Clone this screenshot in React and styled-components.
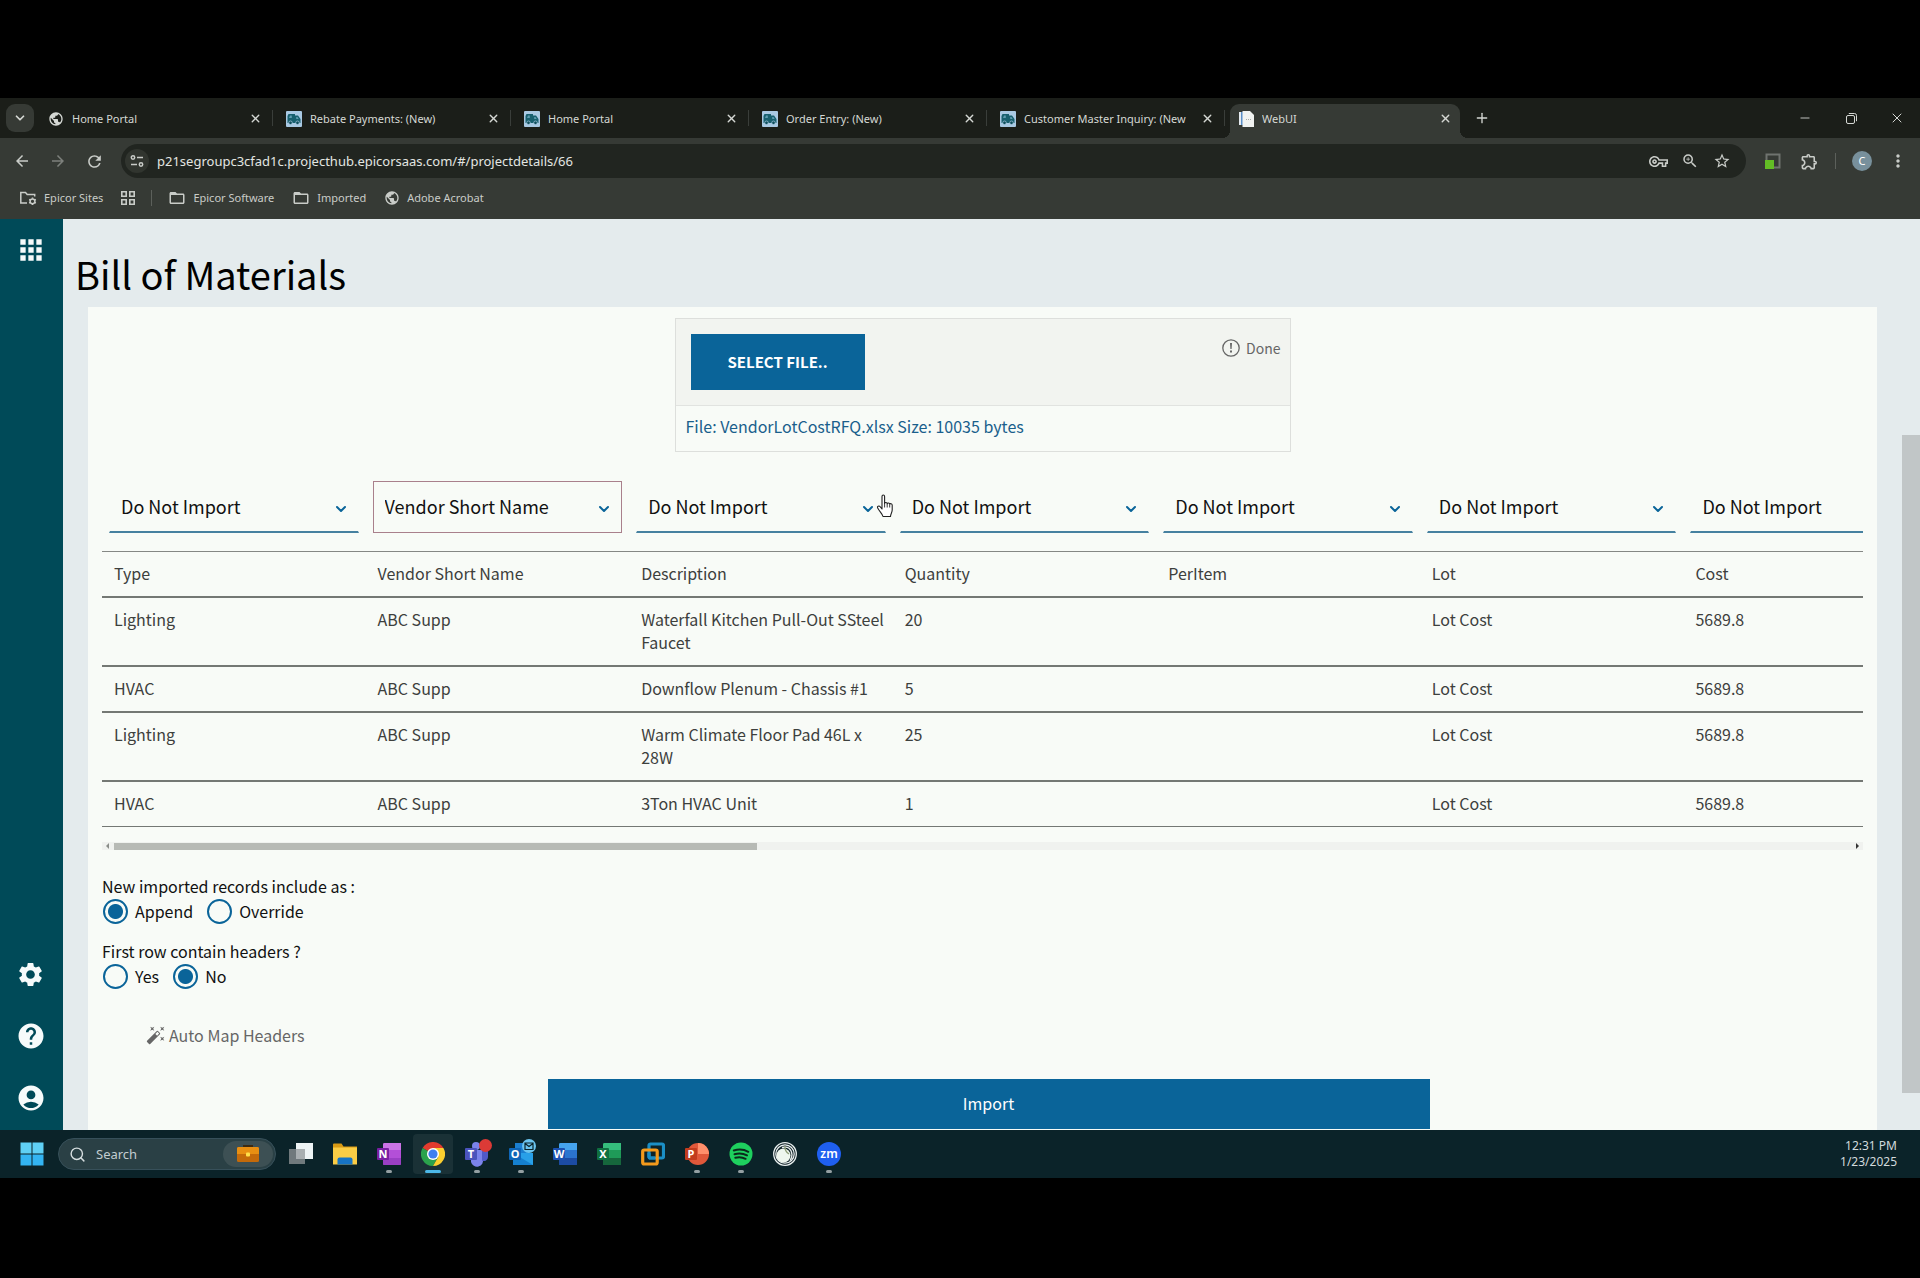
import React, { useState } from 'react'
import styled, { createGlobalStyle, css } from 'styled-components'
import {
  MdAccountCircle, MdApps, MdArrowBack, MdArrowForward, MdAutoFixHigh, MdFolderOpen, MdHelp,
  MdMoreVert, MdOutlineExtension, MdOutlineVpnKey, MdPublic, MdRefresh, MdSettings, MdStarOutline, MdZoomIn,
} from 'react-icons/md'
import { ChevronDown, Minus, Plus, Search, X } from 'lucide-react'

const uiFont = '"Noto Sans", "Open Sans", sans-serif'
const pageFont = '"Noto Sans CJK SC", "Noto Sans", sans-serif'

const GlobalStyle = createGlobalStyle`
  * { box-sizing: border-box; }
  body { margin: 0; background: #000; }
  button, input, select { font: inherit; margin: 0; }
  svg { display: block; flex: none; }
`

const Screen = styled.div`
  position: relative;
  display: flex;
  flex-direction: column;
  min-height: 100vh;
  padding: 98px 0 100px;
  background: #000;
  font-family: ${uiFont};
`

/* ---------- browser ---------- */

const PlainButton = styled.button`
  display: flex;
  align-items: center;
  justify-content: center;
  padding: 0;
  border: 0;
  background: none;
  color: inherit;
  cursor: pointer;
`
const TabStrip = styled.div`
  display: flex;
  height: 40px;
  padding: 6px 0 0 6px;
  background: #1b1e19;
  color: #d5d8d4;
`
const TabSearch = styled(PlainButton)`
  width: 28px;
  height: 28px;
  margin-right: 2px;
  border-radius: 9px;
  background: #363a35;
`
const Tab = styled.div`
  position: relative;
  display: flex;
  flex: 0 1 238px;
  align-items: center;
  gap: 8px;
  min-width: 0;
  padding: 0 10px 5px 12px;
  font-size: 11px;
  line-height: 16px;
  border-right: 1px solid transparent;
  ${p => !p.$active && css`
    background: linear-gradient(#3a3e3a, #3a3e3a) 100% 6px / 1px 16px no-repeat;
  `}
  ${p => p.$active && css`
    margin: 0 4px;
    padding: 0 6px 5px 8px;
    flex-basis: 230px;
    border-radius: 9px 9px 0 0;
    background: #363a35;
    &::before, &::after {
      content: '';
      position: absolute;
      bottom: 0;
      width: 8px;
      height: 8px;
    }
    &::before { left: -8px; background: radial-gradient(circle at 0 0, transparent 8px, #363a35 8px); }
    &::after { right: -9px; background: radial-gradient(circle at 100% 0, transparent 8px, #363a35 8px); }
  `}
`
const TabTitle = styled.span`
  flex: 1;
  overflow: hidden;
  white-space: nowrap;
`
const TabButton = styled(PlainButton)`
  width: 16px;
  height: 16px;
`
const NewTab = styled(PlainButton)`
  width: 36px;
  height: 28px;
`
const WindowControls = styled.div`
  display: flex;
  margin-left: auto;
`
const WindowButton = styled(PlainButton)`
  width: 46px;
  height: 28px;
`
const Toolbar = styled.div`
  display: flex;
  align-items: center;
  height: 46px;
  padding: 0 4px;
  background: #363a35;
  color: #c9ccc8;
`
const ToolButton = styled(PlainButton)`
  width: 36px;
  height: 34px;
  color: ${p => (p.$dim ? '#7d807c' : 'inherit')};
`
const AddressBar = styled.div`
  display: flex;
  flex: 1;
  align-items: center;
  height: 34px;
  margin: 0 9px;
  padding: 0 8px;
  border-radius: 17px;
  background: #212520;
`
const SiteInfo = styled(PlainButton)`
  width: 24px;
  height: 24px;
  margin-left: -4px;
  margin-right: 8px;
  border-radius: 12px;
  background: #31352f;
`
const Address = styled.input`
  flex: 1;
  min-width: 0;
  padding: 0;
  border: 0;
  outline: 0;
  background: none;
  color: #e3e6e2;
  font-size: 13px;
  line-height: 20px;
`
const PillButton = styled(PlainButton)`
  width: 32px;
  height: 32px;
`
const Separator = styled.span`
  width: 1px;
  height: 16px;
  margin: 0 ${p => (p.$wide ? '16px' : '12px 0 8px')};
  background: #5c605b;
`
const Avatar = styled(PlainButton)`
  width: 20px;
  height: 20px;
  margin: 0 8px 0 4px;
  border-radius: 50%;
  background: #78909c;
  color: #fff;
  font-size: 11px;
  line-height: 16px;
`
const Bookmarks = styled.nav`
  display: flex;
  align-items: center;
  height: 35px;
  padding: 0 19px 7px;
  background: #363a35;
  color: #c9ccc8;
  font-size: 11px;
  line-height: 16px;
`
const Bookmark = styled.a`
  display: flex;
  align-items: center;
  gap: 7px;
  margin-right: 18px;
  color: inherit;
  text-decoration: none;
  white-space: nowrap;
`

/* ---------- page ---------- */

const Page = styled.div`
  display: flex;
  flex: 1;
  background: #e4ebed;
  font-family: ${pageFont};
`
const Sidebar = styled.nav`
  display: flex;
  flex-direction: column;
  align-items: center;
  width: 63px;
  flex: none;
  padding: 15px 2px 16px 0;
  background: #004a58;
  color: #f6fbfb;
`
const SideButton = styled(PlainButton)`
  width: 32px;
  height: 32px;
  margin-top: ${p => (p.$push ? 'auto' : '0')};
  margin-bottom: ${p => (p.$last ? '0' : '30px')};
`
const Main = styled.main`
  display: flex;
  flex: 1;
  flex-direction: column;
  min-width: 0;
`
const Title = styled.h1`
  height: 88px;
  margin: 0;
  padding: 25px 0 0 12px;
  color: #000;
  font-size: 38px;
  font-weight: 400;
  line-height: 60px;
`
const Panel = styled.section`
  display: flex;
  flex: 1;
  flex-direction: column;
  margin: 0 25px;
  padding: 11px 14px 1px;
  background: #f8fbf7;
`
const Scroller = styled.div`
  width: 18px;
  flex: none;
  padding: 216px 0 37px;
`
const Thumb = styled.div`
  height: 100%;
  background: #c1c6c7;
`
const Upload = styled.div`
  width: 616px;
  max-width: 100%;
  margin: 0 auto 29px;
  border: 1px solid #dddfdc;
  color: #666;
`
const UploadTop = styled.div`
  display: flex;
  align-items: flex-start;
  justify-content: space-between;
  height: 87px;
  padding: 15px 9px 15px 15px;
  border-bottom: 1px solid #e1e3e0;
  background: #f2f4f0;
`
const SelectFile = styled.button`
  width: 174px;
  height: 56px;
  border: 0;
  background: #0a6499;
  color: #fff;
  font-size: 15px;
  font-weight: 700;
  line-height: 24px;
`
const Status = styled.span`
  display: flex;
  align-items: center;
  gap: 6px;
  padding-top: 2px;
  font-size: 14px;
  line-height: 24px;
`
const FileName = styled.div`
  padding: 8px 10px 13px;
  color: #1a5f8c;
  font-size: 16px;
  line-height: 24px;
`
const TableWrap = styled.div`
  overflow: hidden;
`
const Table = styled.table`
  width: 1845px;
  table-layout: fixed;
  border-collapse: separate;
  border-spacing: 0;
  color: #3d403d;
  font-size: 16px;
  line-height: 23px;
  text-align: left;
`
const MapCell = styled.td`
  height: 71px;
  padding: 0 7px 18px;
  border-bottom: 1px solid #858885;
`
const Cell = styled.td`
  padding: 10px 6px 11px 12px;
  border-bottom: ${p => (p.$last ? '1px' : '2px')} solid #747874;
  font-weight: 400;
  vertical-align: top;
`
const SelectBox = styled.div`
  position: relative;
  svg {
    position: absolute;
    top: 20px;
    right: 10px;
    color: #0a6499;
    pointer-events: none;
  }
`
const Select = styled.select`
  display: block;
  width: 100%;
  height: 52px;
  padding: 0 36px 2px 11px;
  border: 1px solid ${p => (p.$mapped ? '#a9808c' : 'transparent')};
  border-bottom: ${p => (p.$mapped ? '1px solid #a9808c' : '2px solid #4681a0')};
  border-radius: 0;
  background: none;
  color: #111;
  font-size: 18px;
  line-height: 26px;
  appearance: none;
`
const TableScroll = styled.div`
  display: flex;
  align-items: center;
  gap: 2px;
  height: 8px;
  margin: 15px 0 24px;
  background: #f0f2ef;
  color: #8a8d89;
  svg { margin: 0 1px; }
`
const TableTrack = styled.div`
  flex: 1;
  height: 7px;
`
const TableThumb = styled.div`
  width: 37%;
  height: 7px;
  background: #b7bab5;
`
const Options = styled.fieldset`
  display: grid;
  grid-template-columns: auto auto 1fr;
  column-gap: 13px;
  margin: 0 0 15px;
  padding: 0;
  border: 0;
  color: #111;
  font-size: 16px;
  line-height: 25px;
  legend { padding: 0; }
`
const Option = styled.label`
  display: flex;
  align-items: center;
  gap: 7px;
  padding-left: 1px;
`
const Radio = styled.input`
  appearance: none;
  width: 25px;
  height: 25px;
  border: 2px solid #0a6499;
  border-radius: 50%;
  background: transparent;
  &:checked { background: radial-gradient(circle, #0a6499 7px, transparent 8px); }
`
const AutoMap = styled.button`
  display: flex;
  align-items: center;
  gap: 3px;
  align-self: flex-start;
  margin: 18px 0 0 44px;
  padding: 0;
  border: 0;
  background: none;
  color: #666;
  font-size: 16px;
  line-height: 26px;
`
const ImportRow = styled.div`
  display: flex;
  justify-content: center;
  margin-top: auto;
  padding-left: 12px;
`
const ImportButton = styled.button`
  width: 882px;
  height: 50px;
  padding-bottom: 3px;
  border: 0;
  background: #0a6499;
  color: #fff;
  font-size: 16px;
  line-height: 24px;
`

/* ---------- taskbar ---------- */

const Taskbar = styled.footer`
  display: flex;
  align-items: center;
  height: 48px;
  padding: 0 23px 0 10px;
  background: #0b2329;
`
const TaskSearch = styled.label`
  display: flex;
  align-items: center;
  gap: 10px;
  width: 218px;
  height: 32px;
  margin: 0 3px 0 4px;
  padding: 0 2px 0 10px;
  border: 1px solid #37505a;
  border-radius: 16px;
  background: #2a4045;
  color: #d6dee0;
  input {
    flex: 1;
    min-width: 0;
    padding: 0;
    border: 0;
    outline: 0;
    background: none;
    color: inherit;
    font-size: 13px;
    line-height: 20px;
  }
  input::placeholder { color: #c3cdd0; opacity: 1; }
`
const SearchArt = styled.span`
  display: flex;
  align-items: center;
  justify-content: center;
  width: 50px;
  height: 26px;
  border-radius: 13px;
  background: #3d5054;
`
const TaskItem = styled(PlainButton)`
  position: relative;
  width: 40px;
  height: 40px;
  margin: 0 2px;
  border-radius: 4px;
  background: ${p => (p.$state === 'active' ? '#1a3136' : 'none')};
  ${p => p.$state && css`
    &::after {
      content: '';
      position: absolute;
      bottom: 1px;
      width: ${p.$state === 'active' ? '16px' : '6px'};
      height: 3px;
      border-radius: 2px;
      background: ${p.$state === 'active' ? '#4cb8e8' : '#94a0a3'};
    }
  `}
`
const Clock = styled.time`
  margin-left: auto;
  color: #d2dadd;
  font-size: 12px;
  line-height: 16px;
  text-align: right;
  white-space: pre-line;
`
const Pointer = styled.svg`
  position: absolute;
  top: 494px;
  left: 876px;
`

/* ---------- drawings ---------- */

const TruckIcon = () => (
  <svg width="16" height="16" viewBox="0 0 16 16">
    <rect width="16" height="16" rx="1" fill="#a9c9e3" />
    <path d="M2.500 3H9v1.500h3l2.500 3.500v4H1.500V5z" fill="#17606f" />
    <path d="M4 4.500h1.800v2.500H3zM10.200 6h1.300l1.200 1.900h-2.500z" fill="#5d9bb0" />
    <circle cx="4.500" cy="11.800" r="1.800" fill="#0f4f5c" stroke="#a9c9e3" strokeWidth=".7" />
    <circle cx="11.500" cy="11.800" r="1.800" fill="#0f4f5c" stroke="#a9c9e3" strokeWidth=".7" />
  </svg>
)

const DocIcon = () => (
  <svg width="16" height="16" viewBox="0 0 16 16">
    <path d="M1 1h9v13H2z" fill="#5b8fc7" />
    <path d="M4.500 0H12l4 4v12H4.500z" fill="#f1f3f1" />
    <path d="M1 1h2v13H1z" fill="#e6ebf0" />
    <path d="M8 8.500h6" stroke="#a8aca8" strokeDasharray="1 1" />
  </svg>
)

const RestoreIcon = () => (
  <svg width="11" height="11" viewBox="0 0 11 11" fill="none" stroke="currentColor">
    <rect x=".5" y="2.500" width="8" height="8" rx="1.500" />
    <path d="M2.800.5H8.500a2 2 0 0 1 2 2v5.700" />
  </svg>
)

const TuneIcon = () => (
  <svg width="14" height="14" viewBox="0 0 14 14" fill="none" stroke="currentColor" strokeWidth="1.500">
    <circle cx="3" cy="3.500" r="1.700" />
    <path d="M7 3.500h6M1 10.500h6" />
    <circle cx="11" cy="10.500" r="1.700" />
  </svg>
)

const ManagedFolder = () => (
  <svg width="18" height="16" viewBox="0 0 18 16" fill="none" stroke="currentColor" strokeWidth="1.500">
    <path d="M8 13H1.800V2.500h4.700l1.700 2h7.500v2" />
    <circle cx="13.500" cy="11.300" r="2.400" />
    <path d="M13.500 7.500v1.300M13.500 13.800v1.300M10.200 9.400l1.100.7M15.700 12.500l1.100.7M16.800 9.400l-1.100.7M11.300 12.500l-1.100.7" />
  </svg>
)

const GridIcon = () => (
  <svg width="14" height="14" viewBox="0 0 14 14" fill="none" stroke="currentColor" strokeWidth="1.600">
    <path d="M.8.8h4.400v4.400H.8zM8.800.8h4.400v4.400H8.800zM.8 8.800h4.400v4.400H.8zM8.800 8.800h4.400v4.400H8.800z" />
  </svg>
)

const ScreenExt = () => (
  <svg width="16" height="16" viewBox="0 0 16 16">
    <path d="M1.500 7V1.500h13v13H9" fill="none" stroke="#6f736f" strokeWidth="2" />
    <path d="M0 7h9v9H0z" fill="#63bd25" />
  </svg>
)

const AlertIcon = () => (
  <svg width="18" height="18" viewBox="0 0 18 18">
    <circle cx="9" cy="9" r="8.200" fill="none" stroke="currentColor" strokeWidth="1.300" />
    <path d="M8 4h2l-.4 6H8.400zM8 11.500h2v2H8z" fill="currentColor" />
  </svg>
)

const WindowsIcon = () => (
  <svg width="24" height="24" viewBox="0 0 24 24">
    <path d="M.5.5h11v11H.5zM12.500.5h11v11h-11z" fill="#5fd0f5" />
    <path d="M.5 12.500h11v11H.5zM12.500 12.500h11v11h-11z" fill="#33b4f2" />
  </svg>
)

const BriefcaseIcon = () => (
  <svg width="24" height="18" viewBox="0 0 24 18">
    <path d="M8 3V1h8v2" fill="none" stroke="#3b2a12" strokeWidth="2" />
    <rect x="1" y="2" width="22" height="15" rx="1.500" fill="#c46a0a" />
    <path d="M1 3.500A1.500 1.500 0 0 1 2.500 2h19A1.500 1.500 0 0 1 23 3.500V9H1z" fill="#e88f12" />
    <rect x="10" y="7.500" width="4" height="4" rx="1" fill="#ffe04a" />
  </svg>
)

const TaskViewIcon = () => (
  <svg width="24" height="24" viewBox="0 0 24 24">
    <rect x="7" y="1" width="17" height="16" fill="#eef4f5" />
    <rect x="0" y="7" width="16" height="15" fill="#70797c" />
    <path d="M7 7h9v10H7z" fill="#a9afb1" />
  </svg>
)

const ExplorerIcon = () => (
  <svg width="24" height="24" viewBox="0 0 24 24">
    <path d="M0 2.500q0-1 1-1h7.500l2 3H24v4H0z" fill="#d99a14" />
    <path d="M0 5.500h24v17H0z" fill="#fbcd45" />
    <path d="M4.500 22.500v-5q0-2 2-2h11q2 0 2 2v5z" fill="#1774c4" />
  </svg>
)

const OfficeIcon = ({ letter, tile, dark, mid, light, round }) => (
  <svg width="24" height="24" viewBox="0 0 24 24">
    {round ? (
      <>
        <circle cx="13" cy="12" r="11" fill={mid} />
        <path d="M13 1a11 11 0 0 1 11 11H13z" fill={light} />
      </>
    ) : (
      <>
        <rect x="6" y="1" width="18" height="22" rx="1.500" fill={mid} />
        <path d="M6 2.500A1.500 1.500 0 0 1 7.500 1H24v7H6z" fill={light} />
        <path d="M6 16h18v5.500a1.500 1.500 0 0 1-1.500 1.500h-15A1.500 1.500 0 0 1 6 21.500z" fill={dark} />
      </>
    )}
    <rect x="0" y="6" width="12" height="12" rx="1" fill={tile} />
    <text x="6" y="16" fill="#fff" fontFamily="Noto Sans" fontSize="11" fontWeight="700" textAnchor="middle">{letter}</text>
  </svg>
)

const ChromeIcon = () => (
  <svg width="24" height="24" viewBox="0 0 24 24">
    <path d="M12 12 1.600 6A12 12 0 0 1 22.400 6z" fill="#e33b2e" />
    <path d="M12 12 1.600 6A12 12 0 0 0 12 24l5-9z" fill="#2ba24c" />
    <path d="M12 6h10.400A12 12 0 0 1 12 24l5.200-9z" fill="#fccf2f" />
    <circle cx="12" cy="12" r="6" fill="#fff" />
    <circle cx="12" cy="12" r="4.600" fill="#3f7ff0" />
  </svg>
)

const TeamsIcon = () => (
  <svg width="30" height="30" viewBox="0 0 30 30">
    <circle cx="14" cy="7" r="4" fill="#7b83eb" />
    <path d="M9 11h12v9a6 6 0 0 1-12 3z" fill="#7b83eb" />
    <path d="M20 11h6v7a4 4 0 0 1-6 3.500z" fill="#5059c9" />
    <rect x="3" y="9" width="12" height="12" rx="1" fill="#4b53bc" />
    <text x="9" y="19" fill="#fff" fontFamily="Noto Sans" fontSize="11" fontWeight="700" textAnchor="middle">T</text>
    <circle cx="23.500" cy="6.500" r="6.500" fill="#dc3a36" />
  </svg>
)

const OutlookIcon = () => (
  <svg width="30" height="30" viewBox="0 0 30 30">
    <path d="M9 4h14v14H9z" fill="#1b7fd0" />
    <path d="M7 14h20v12H7z" fill="#28a0e8" />
    <path d="m7 14 20 12H7z" fill="#1580cf" />
    <rect x="3" y="9" width="12" height="12" rx="1" fill="#0f66b8" />
    <text x="9" y="19" fill="#fff" fontFamily="Noto Sans" fontSize="11" fontWeight="700" textAnchor="middle">O</text>
    <circle cx="23" cy="7" r="7" fill="#6cc5f0" />
    <path d="M19 4h8v6.500h-8zM19 4.500l4 3 4-3" fill="none" stroke="#0b2329" strokeWidth="1.200" />
  </svg>
)

const VmwareIcon = () => (
  <svg width="24" height="24" viewBox="0 0 24 24" fill="none" strokeWidth="3.200">
    <rect x="8" y="2" width="14.500" height="14" rx="1.500" stroke="#1b8fc6" />
    <rect x="1.700" y="8" width="14.500" height="14" rx="1.500" stroke="#f39a1c" />
    <path d="M8 11v3.500q0 1.500 1.500 1.500H14" stroke="#1b8fc6" />
  </svg>
)

const SpotifyIcon = () => (
  <svg width="24" height="24" viewBox="0 0 24 24">
    <circle cx="12" cy="12" r="11.500" fill="#1ed05e" />
    <path d="M4.800 8.500q8-2.300 14.500 1.300M5.500 12.200q6.700-1.900 12.500 1.200M6.300 15.700q5.500-1.500 10.300 1.100" fill="none" stroke="#0b2a1c" strokeWidth="2" strokeLinecap="round" />
  </svg>
)

const ObsIcon = () => (
  <svg width="24" height="24" viewBox="0 0 24 24" fill="none">
    <circle cx="12" cy="12" r="11.300" fill="#14262b" stroke="#e9efef" strokeWidth="1.300" />
    <circle cx="12" cy="12" r="9.200" stroke="#e9efef" strokeWidth="1.200" />
    <circle cx="10.500" cy="13.500" r="7" fill="#eef6ee" />
    <path d="M9 5.500q9-2 10 7 .1 3-2 6" stroke="#e9efef" strokeWidth="1.300" />
    <path d="M12 4q-.5 5 4 8" stroke="#8f9f78" strokeWidth="1.300" />
  </svg>
)

const ZoomIcon = () => (
  <svg width="24" height="24" viewBox="0 0 24 24">
    <circle cx="12" cy="12" r="12" fill="#1f5ff0" />
    <text x="12" y="16" fill="#fff" fontFamily="Noto Sans" fontSize="12" fontWeight="600" textAnchor="middle">zm</text>
  </svg>
)

const HandPointer = () => (
  <Pointer width="19" height="24" viewBox="0 0 19 24" aria-hidden="true">
    <path
      d="M6 2.500c0-2 2.600-2 2.600 0v7c.2-1.500 2.500-1.400 2.600.3.300-1.300 2.400-1.100 2.500.5.500-1 2.500-.8 2.500 1V16c0 2.500-1.700 4-1.700 6.500H7C6.500 20 3.500 17.500 1.700 14c-.8-1.800 1.300-2.700 2.400-1.300L6 15z"
      fill="#fff" stroke="#222" strokeWidth="1.100" strokeLinejoin="round"
    />
    <path d="M8.600 9v4.500M11.200 10v3.500M13.700 10.500v3" stroke="#222" strokeWidth=".9" />
  </Pointer>
)

/* ---------- data ---------- */

const TABS = [
  { title: 'Home Portal', icon: <MdPublic size={16} /> },
  { title: 'Rebate Payments: (New)', icon: <TruckIcon /> },
  { title: 'Home Portal', icon: <TruckIcon /> },
  { title: 'Order Entry: (New)', icon: <TruckIcon /> },
  { title: 'Customer Master Inquiry: (New', icon: <TruckIcon /> },
  { title: 'WebUI', icon: <DocIcon />, active: true },
]

const HEADERS = ['Type', 'Vendor Short Name', 'Description', 'Quantity', 'PerItem', 'Lot', 'Cost']

const ROWS = [
  ['Lighting', 'ABC Supp', 'Waterfall Kitchen Pull-Out SSteel Faucet', '20', '', 'Lot Cost', '5689.8'],
  ['HVAC', 'ABC Supp', 'Downflow Plenum - Chassis #1', '5', '', 'Lot Cost', '5689.8'],
  ['Lighting', 'ABC Supp', 'Warm Climate Floor Pad 46L x 28W', '25', '', 'Lot Cost', '5689.8'],
  ['HVAC', 'ABC Supp', '3Ton HVAC Unit', '1', '', 'Lot Cost', '5689.8'],
]

const APPS = [
  { name: 'Task view', icon: <TaskViewIcon /> },
  { name: 'File Explorer', icon: <ExplorerIcon /> },
  { name: 'OneNote', state: 'open', icon: <OfficeIcon letter="N" tile="#7a1fa2" dark="#9a3fc4" mid="#b34fd8" light="#cb74e6" /> },
  { name: 'Chrome', state: 'active', icon: <ChromeIcon /> },
  { name: 'Teams', state: 'open', icon: <TeamsIcon /> },
  { name: 'Outlook', state: 'open', icon: <OutlookIcon /> },
  { name: 'Word', icon: <OfficeIcon letter="W" tile="#1b50b0" dark="#1c4ba3" mid="#2b74cf" light="#45a3ee" /> },
  { name: 'Excel', icon: <OfficeIcon letter="X" tile="#107040" dark="#16663c" mid="#1f9a58" light="#35bd7c" /> },
  { name: 'VMware', icon: <VmwareIcon /> },
  { name: 'PowerPoint', state: 'open', icon: <OfficeIcon round letter="P" tile="#c23c1e" mid="#e0583a" light="#ff8f6b" /> },
  { name: 'Spotify', state: 'open', icon: <SpotifyIcon /> },
  { name: 'OBS', icon: <ObsIcon /> },
  { name: 'Zoom', state: 'open', icon: <ZoomIcon /> },
]

/* ---------- components ---------- */

const Browser = () => (
  <header>
    <TabStrip>
      <TabSearch aria-label="Search tabs"><ChevronDown size={14} strokeWidth={3} /></TabSearch>
      {TABS.map((tab, i) => (
        <Tab key={i} $active={tab.active}>
          {tab.icon}
          <TabTitle>{tab.title}</TabTitle>
          <TabButton aria-label="Close tab"><X size={13} strokeWidth={2.500} /></TabButton>
        </Tab>
      ))}
      <NewTab aria-label="New tab"><Plus size={16} /></NewTab>
      <WindowControls>
        <WindowButton aria-label="Minimize"><Minus size={14} strokeWidth={1.500} /></WindowButton>
        <WindowButton aria-label="Restore"><RestoreIcon /></WindowButton>
        <WindowButton aria-label="Close"><X size={16} strokeWidth={1.500} /></WindowButton>
      </WindowControls>
    </TabStrip>
    <Toolbar>
      <ToolButton aria-label="Back"><MdArrowBack size={18} /></ToolButton>
      <ToolButton aria-label="Forward" $dim><MdArrowForward size={18} /></ToolButton>
      <ToolButton aria-label="Reload"><MdRefresh size={19} /></ToolButton>
      <AddressBar>
        <SiteInfo aria-label="Site information"><TuneIcon /></SiteInfo>
        <Address aria-label="Address" defaultValue="p21segroupc3cfad1c.projecthub.epicorsaas.com/#/projectdetails/66" />
        <PillButton aria-label="Passwords"><MdOutlineVpnKey size={19} /></PillButton>
        <PillButton aria-label="Zoom"><MdZoomIn size={18} /></PillButton>
        <PillButton aria-label="Bookmark this tab"><MdStarOutline size={18} /></PillButton>
      </AddressBar>
      <ToolButton aria-label="Capture"><ScreenExt /></ToolButton>
      <ToolButton aria-label="Extensions"><MdOutlineExtension size={19} /></ToolButton>
      <Separator />
      <Avatar aria-label="Profile">C</Avatar>
      <ToolButton aria-label="Menu"><MdMoreVert size={20} /></ToolButton>
    </Toolbar>
    <Bookmarks>
      <Bookmark href="#"><ManagedFolder />Epicor Sites</Bookmark>
      <PlainButton aria-label="Apps"><GridIcon /></PlainButton>
      <Separator $wide />
      <Bookmark href="#"><MdFolderOpen size={18} />Epicor Software</Bookmark>
      <Bookmark href="#"><MdFolderOpen size={18} />Imported</Bookmark>
      <Bookmark href="#"><MdPublic size={16} />Adobe Acrobat</Bookmark>
    </Bookmarks>
  </header>
)

const MappingSelect = ({ header }) => {
  const [value, setValue] = useState(header === 'Vendor Short Name' ? header : 'Do Not Import')
  return (
    <SelectBox>
      <Select
        aria-label={`Import ${header} as`}
        value={value}
        $mapped={value !== 'Do Not Import'}
        onChange={e => setValue(e.target.value)}
      >
        <option>Do Not Import</option>
        {HEADERS.map(h => <option key={h}>{h}</option>)}
      </Select>
      <ChevronDown size={16} strokeWidth={3} />
    </SelectBox>
  )
}

const ImportTable = () => (
  <>
    <TableWrap>
      <Table>
        <thead>
          <tr>{HEADERS.map(h => <MapCell key={h}><MappingSelect header={h} /></MapCell>)}</tr>
          <tr>{HEADERS.map(h => <Cell as="th" key={h}>{h}</Cell>)}</tr>
        </thead>
        <tbody>
          {ROWS.map((row, i) => (
            <tr key={i}>
              {row.map((value, j) => <Cell key={j} $last={i === ROWS.length - 1}>{value}</Cell>)}
            </tr>
          ))}
        </tbody>
      </Table>
    </TableWrap>
    <TableScroll>
      <svg width="8" height="6" viewBox="0 0 8 6"><path d="M6 0v6L3 3z" fill="currentColor" /></svg>
      <TableTrack><TableThumb /></TableTrack>
      <svg width="8" height="6" viewBox="0 0 8 6"><path d="M2 0v6l3-3z" fill="#333" /></svg>
    </TableScroll>
  </>
)

const RadioGroup = ({ legend, name, options, initial }) => {
  const [value, setValue] = useState(initial)
  return (
    <Options>
      <legend>{legend}</legend>
      {options.map(o => (
        <Option key={o}>
          <Radio type="radio" name={name} checked={value === o} onChange={() => setValue(o)} />
          {o}
        </Option>
      ))}
    </Options>
  )
}

export default function App() {
  return (
    <Screen>
      <GlobalStyle />
      <Browser />
      <Page>
        <Sidebar>
          <SideButton aria-label="Apps"><MdApps size={32} /></SideButton>
          <SideButton aria-label="Settings" $push><MdSettings size={29} /></SideButton>
          <SideButton aria-label="Help"><MdHelp size={30} /></SideButton>
          <SideButton aria-label="Account" $last><MdAccountCircle size={30} /></SideButton>
        </Sidebar>
        <Main>
          <Title>Bill of Materials</Title>
          <Panel>
            <Upload>
              <UploadTop>
                <SelectFile>SELECT FILE..</SelectFile>
                <Status><AlertIcon />Done</Status>
              </UploadTop>
              <FileName>File: VendorLotCostRFQ.xlsx Size: 10035 bytes</FileName>
            </Upload>
            <ImportTable />
            <RadioGroup legend="New imported records include as :" name="mode" options={['Append', 'Override']} initial="Append" />
            <RadioGroup legend="First row contain headers ?" name="headers" options={['Yes', 'No']} initial="No" />
            <AutoMap><MdAutoFixHigh size={20} />Auto Map Headers</AutoMap>
            <ImportRow><ImportButton>Import</ImportButton></ImportRow>
          </Panel>
        </Main>
        <Scroller><Thumb /></Scroller>
      </Page>
      <Taskbar>
        <TaskItem aria-label="Start"><WindowsIcon /></TaskItem>
        <TaskSearch>
          <Search size={17} />
          <input aria-label="Search" placeholder="Search" />
          <SearchArt><BriefcaseIcon /></SearchArt>
        </TaskSearch>
        {APPS.map(app => (
          <TaskItem key={app.name} aria-label={app.name} $state={app.state}>{app.icon}</TaskItem>
        ))}
        <Clock>{'12:31 PM\n1/23/2025'}</Clock>
      </Taskbar>
      <HandPointer />
    </Screen>
  )
}
